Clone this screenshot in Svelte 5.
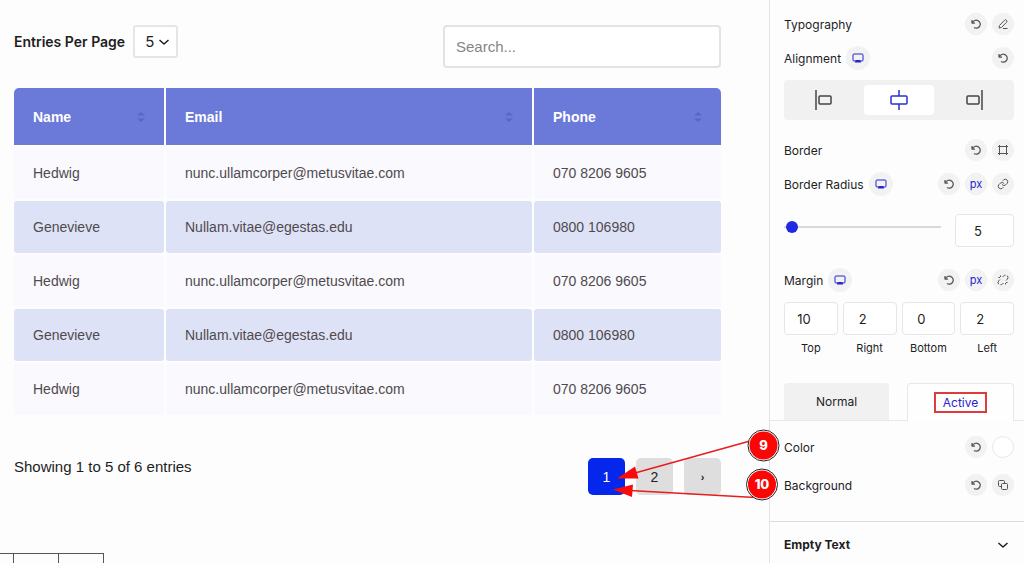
<!-- App.svelte -->

<script>
    const contacts = [
        { name: 'Hedwig', email: 'nunc.ullamcorper@metusvitae.com', phone: '070 8206 9605' },
        { name: 'Genevieve', email: 'Nullam.vitae@egestas.edu', phone: '0800 106980' },
        { name: 'Hedwig', email: 'nunc.ullamcorper@metusvitae.com', phone: '070 8206 9605' },
        { name: 'Genevieve', email: 'Nullam.vitae@egestas.edu', phone: '0800 106980' },
        { name: 'Hedwig', email: 'nunc.ullamcorper@metusvitae.com', phone: '070 8206 9605' },
        { name: 'Genevieve', email: 'Nullam.vitae@egestas.edu', phone: '0800 106980' }
    ];
    const columns = ['Name', 'Email', 'Phone'];
    const alignments = ['left', 'center', 'right'];

    let perPage = 5;
    let currentPage = 1;
    let search = '';
    let alignment = 'center';
    let radius = 5;
    let activeTab = 'Active';
    let margins = [
        { side: 'Top', value: '10' },
        { side: 'Right', value: '2' },
        { side: 'Bottom', value: '0' },
        { side: 'Left', value: '2' }
    ];

    $: filtered = contacts.filter(c => (c.name + c.email + c.phone).toLowerCase().includes(search.toLowerCase()));
    $: pageCount = Math.max(1, Math.ceil(filtered.length / perPage));
    $: first = (currentPage - 1) * perPage;
    $: visible = filtered.slice(first, first + perPage);

    function nextPage() {
        if (currentPage < pageCount) currentPage++;
    }
</script>

{#snippet icon(name)}
    <svg class="icon" viewBox="0 0 24 24" aria-hidden="true">
        {#if name === 'reset'}
            <path class="bold" d="M4 4v6h6M5 9.5A8 8 0 1 1 8 19" />
        {:else if name === 'edit'}
            <path d="M5 15 15 4.5a2.5 2.5 0 0 1 4 4L9 19l-5 1zM12 21h9" />
        {:else if name === 'screen'}
            <rect x="2" y="4" width="20" height="14" rx="2" />
            <path class="solid" d="M7 16h10v3h1v2H6v-2h1z" />
        {:else if name === 'frame'}
            <path d="M5 2v20M19 2v20M2 5h20M2 19h20" />
        {:else if name === 'link'}
            <path d="M10 13a5 5 0 0 0 7.5.5l3-3a5 5 0 0 0-7-7l-2 2M14 11a5 5 0 0 0-7.5-.5l-3 3a5 5 0 0 0 7 7l2-2" />
        {:else if name === 'unlink'}
            <path d="m18 13 2.5-2.5a5 5 0 0 0 0-7M17 2.5a5 5 0 0 0-3.5 1L11 6M6 11l-2.5 2.5a5 5 0 0 0 0 7M7 21.5a5 5 0 0 0 3.5-1L13 18M7 3v3M3 7h3M17 18v3M18 17h3" />
        {:else if name === 'copy'}
            <rect x="3" y="3" width="12" height="12" rx="2" />
            <rect class="front" x="9" y="9" width="12" height="12" rx="2" />
        {:else if name === 'chevron'}
            <path d="m3 8 9 8 9-8" />
        {/if}
    </svg>
{/snippet}

<div class="page">
    <main>
        <div class="toolbar">
            <div class="entries">
                <label for="perPage">Entries Per Page</label>
                <div class="select">
                    <select id="perPage" bind:value={perPage} on:change={() => (currentPage = 1)}>
                        <option value={5}>5</option>
                        <option value={10}>10</option>
                    </select>
                    {@render icon('chevron')}
                </div>
            </div>
            <input class="search" type="text" placeholder="Search..." aria-label="Search" bind:value={search} />
        </div>

        <table>
            <thead>
                <tr>
                    {#each columns as column}
                        <th>
                            <div class="heading">
                                {column}
                                <svg class="sort" viewBox="0 0 8 12" aria-hidden="true">
                                    <path d="M0 4.5 4 1l4 3.5zM0 7.5h8L4 11z" />
                                </svg>
                            </div>
                        </th>
                    {/each}
                </tr>
            </thead>
            <tbody>
                {#each visible as contact}
                    <tr>
                        <td>{contact.name}</td>
                        <td>{contact.email}</td>
                        <td>{contact.phone}</td>
                    </tr>
                {/each}
            </tbody>
        </table>

        <div class="table-footer">
            <span>Showing {first + 1} to {first + visible.length} of {filtered.length} entries</span>
            <div class="pagination">
                {#each Array(pageCount) as _, i}
                    <button class:current={currentPage === i + 1} on:click={() => (currentPage = i + 1)}>{i + 1}</button>
                {/each}
                <button class="next" aria-label="Next page" on:click={nextPage}>›</button>
            </div>
        </div>

        <div class="toolstrip"><i></i><i></i><i></i></div>
    </main>

    <aside>
        <section>
            <div class="row">
                <span>Typography</span>
                <div class="actions">
                    <button aria-label="Reset typography">{@render icon('reset')}</button>
                    <button aria-label="Edit typography">{@render icon('edit')}</button>
                </div>
            </div>
            <div class="row">
                <span>Alignment</span>
                <button class="device" aria-label="Alignment device">{@render icon('screen')}</button>
                <div class="actions">
                    <button aria-label="Reset alignment">{@render icon('reset')}</button>
                </div>
            </div>
            <div class="segments">
                {#each alignments as side}
                    <button class:selected={alignment === side} aria-label="Align {side}" on:click={() => (alignment = side)}>
                        <svg viewBox="0 0 20 20" aria-hidden="true">
                            {#if side === 'left'}
                                <path d="M2 0v20" />
                                <rect x="5" y="6" width="12" height="8" rx="1" />
                            {:else if side === 'center'}
                                <path d="M10 0v6M10 14v6" />
                                <rect x="2" y="6" width="16" height="8" rx="1" />
                            {:else}
                                <path d="M18 0v20" />
                                <rect x="3" y="6" width="12" height="8" rx="1" />
                            {/if}
                        </svg>
                    </button>
                {/each}
            </div>
        </section>

        <section class="border">
            <div class="row">
                <span>Border</span>
                <div class="actions">
                    <button aria-label="Reset border">{@render icon('reset')}</button>
                    <button aria-label="Edit border">{@render icon('frame')}</button>
                </div>
            </div>
            <div class="row">
                <label for="radius">Border Radius</label>
                <button class="device" aria-label="Border radius device">{@render icon('screen')}</button>
                <div class="actions">
                    <button aria-label="Reset border radius">{@render icon('reset')}</button>
                    <button class="unit">px</button>
                    <button aria-label="Link corners">{@render icon('link')}</button>
                </div>
            </div>
            <div class="slider">
                <input type="range" min="0" max="300" aria-label="Border radius slider" bind:value={radius} />
                <input id="radius" class="number" type="text" bind:value={radius} />
            </div>
        </section>

        <section class="margin">
            <div class="row">
                <span>Margin</span>
                <button class="device" aria-label="Margin device">{@render icon('screen')}</button>
                <div class="actions">
                    <button aria-label="Reset margin">{@render icon('reset')}</button>
                    <button class="unit">px</button>
                    <button aria-label="Unlink sides">{@render icon('unlink')}</button>
                </div>
            </div>
            <div class="sides">
                {#each margins as margin}
                    <label>
                        <input class="number" type="text" bind:value={margin.value} />
                        {margin.side}
                    </label>
                {/each}
            </div>
        </section>

        <div class="tabs">
            <button class:active={activeTab === 'Normal'} on:click={() => (activeTab = 'Normal')}>Normal</button>
            <button class:active={activeTab === 'Active'} on:click={() => (activeTab = 'Active')}><span class="marked">Active</span></button>
        </div>

        <section class="colors">
            <div class="row">
                <span>Color</span>
                <div class="actions">
                    <button aria-label="Reset color">{@render icon('reset')}</button>
                    <button class="swatch" aria-label="Pick color"></button>
                </div>
            </div>
            <div class="row">
                <span>Background</span>
                <div class="actions">
                    <button aria-label="Reset background">{@render icon('reset')}</button>
                    <button aria-label="Edit background">{@render icon('copy')}</button>
                </div>
            </div>
        </section>

        <button class="accordion">Empty Text {@render icon('chevron')}</button>
    </aside>

    <!-- numbered callouts pointing at the current page button -->
    <svg class="callouts" viewBox="600 425 180 80" aria-hidden="true">
        <path class="line" d="M750 441 635 473M765 498 630 490.5" />
        <path class="head" d="M617 478.5 635 466.5 638.5 478.5zM613 489.5 633 484.5 632 497z" />
        <g class="badge">
            <circle class="outer" cx="763.5" cy="445.5" r="15.5" />
            <circle class="inner" cx="763.5" cy="445.5" r="14" />
            <text x="763.5" y="450">9</text>
            <circle class="outer" cx="762" cy="484.5" r="15.5" />
            <circle class="inner" cx="762" cy="484.5" r="14" />
            <text x="762" y="489">10</text>
        </g>
    </svg>
</div>

<style>
    :global(body) {
        margin: 0;
        background: #fdfdfe;
    }

    .page {
        position: relative;
        display: flex;
        min-height: 100vh;
        overflow: hidden;
        font-family: Inter, "Liberation Sans", sans-serif;
        font-size: 12px;
        color: #1e1e1e;
    }

    button, input, select {
        box-sizing: border-box;
        margin: 0;
        padding: 0;
        border: 0;
        background: none;
        font: inherit;
        color: inherit;
    }

    .icon {
        width: 12px;
        height: 12px;
        fill: none;
        stroke: currentColor;
        stroke-width: 2;
        stroke-linejoin: round;
    }

    .bold {
        stroke-width: 2.5;
    }

    main {
        flex: 1;
        display: flex;
        flex-direction: column;
        padding-top: 25px;
        font-family: "Liberation Sans", Arial, sans-serif;
    }

    .toolbar, .table-footer {
        display: flex;
        justify-content: space-between;
        align-items: flex-start;
        margin: 0 48px 0 14px;
    }

    .entries {
        display: flex;
        align-items: center;
        gap: 8px;
        font-family: Inter, sans-serif;
        font-size: 14px;
        font-weight: 600;
    }

    .select {
        position: relative;
        font-size: 15px;
        font-weight: 400;
    }

    .select select {
        appearance: none;
        width: 45px;
        height: 33px;
        padding-left: 10px;
        border: 2px solid #e6e6e6;
        border-radius: 3px;
        background: #fff;
    }

    .select .icon {
        position: absolute;
        top: 11px;
        right: 8px;
        stroke-width: 3;
        pointer-events: none;
    }

    .search {
        width: 278px;
        height: 43px;
        padding: 0 11px;
        border: 2px solid #e3e3e3;
        border-radius: 4px;
        background: #fff;
        font-size: 15px;
    }

    .search::placeholder {
        color: #858585;
    }

    table {
        margin: 18px 46px 0 12px;
        border-spacing: 2px;
        table-layout: fixed;
        font-size: 14px;
    }

    th, td {
        padding: 0 19px;
        text-align: left;
    }

    th {
        height: 57px;
        background: #6b79d8;
        color: #fff;
    }

    th:first-child {
        width: 112px;
        border-top-left-radius: 5px;
    }

    th:last-child {
        width: 149px;
        border-top-right-radius: 5px;
    }

    .heading {
        display: flex;
        justify-content: space-between;
        align-items: center;
    }

    .sort {
        width: 8px;
        height: 12px;
        fill: #5868c2;
    }

    td {
        height: 52px;
        background: #f9f9fe;
        color: #504a4d;
    }

    tr:nth-child(even) td {
        border-radius: 3px;
        background: #dee2f7;
    }

    .table-footer {
        margin-top: 41px;
        font-size: 15px;
        line-height: 18px;
    }

    .pagination {
        display: flex;
        gap: 11px;
        font-size: 14px;
    }

    .pagination button {
        width: 37px;
        height: 37px;
        border-radius: 5px;
        background: #dedede;
        color: #222;
    }

    .pagination .current {
        background: #0527ec;
        color: #fff;
    }

    .pagination .next {
        font-size: 11px;
        font-weight: 700;
    }

    .toolstrip {
        display: flex;
        margin-top: 58px;
    }

    .toolstrip i {
        box-sizing: border-box;
        width: 45px;
        height: 10px;
        border-top: 1px solid #555;
        border-right: 1px solid #555;
    }

    .toolstrip i:first-child {
        width: 14px;
    }

    aside {
        box-sizing: border-box;
        width: 255px;
        padding-top: 12px;
        border-left: 1px solid #e2e2e4;
    }

    section {
        padding: 0 10px 0 14px;
    }

    .row {
        display: flex;
        align-items: center;
        height: 24px;
        margin-bottom: 10px;
    }

    .actions {
        display: flex;
        gap: 5px;
        margin-left: auto;
    }

    .row button {
        display: flex;
        align-items: center;
        justify-content: center;
        width: 22px;
        height: 22px;
        border-radius: 50%;
        background: #f2f2f3;
        color: #555;
    }

    .row .device {
        width: 24px;
        height: 24px;
        margin-left: 5px;
        color: #2a22cf;
    }

    .row .unit {
        color: #2a22cf;
        font-size: 11px;
    }

    .row .swatch {
        border: 1px solid #e8e8e8;
        background: #fff;
    }

    .solid {
        fill: currentColor;
        stroke: none;
    }

    .front {
        fill: #f2f2f3;
    }

    .segments {
        display: grid;
        grid-template-columns: repeat(3, 1fr);
        gap: 6px;
        padding: 5px;
        border-radius: 4px;
        background: #f1f1f1;
    }

    .segments button {
        display: flex;
        align-items: center;
        justify-content: center;
        height: 30px;
        border-radius: 4px;
        color: #444;
    }

    .segments .selected {
        background: #fff;
        color: #2a2fd8;
    }

    .segments svg {
        width: 20px;
        height: 20px;
        fill: none;
        stroke: currentColor;
        stroke-width: 1.5;
    }

    .border {
        margin-top: 18px;
    }

    .slider {
        display: flex;
        align-items: flex-start;
        gap: 14px;
        padding-top: 8px;
    }

    .slider input[type="range"] {
        appearance: none;
        flex: 1;
        min-width: 0;
        height: 26px;
    }

    .slider input[type="range"]::-webkit-slider-runnable-track {
        height: 2px;
        background: #d9d9dc;
    }

    .slider input[type="range"]::-webkit-slider-thumb {
        appearance: none;
        width: 12px;
        height: 12px;
        margin-top: -5px;
        border-radius: 50%;
        background: #2129e0;
    }

    .number {
        height: 33px;
        border: 1px solid #e6e6e8;
        border-radius: 4px;
        background: #fff;
        font-size: 13px;
    }

    .slider .number {
        width: 59px;
        padding-left: 18px;
    }

    .margin {
        margin-top: 21px;
    }

    .sides {
        display: grid;
        grid-template-columns: repeat(4, 1fr);
        gap: 5px;
    }

    .sides label {
        display: flex;
        flex-direction: column;
        gap: 5px;
        font-size: 11px;
        line-height: 16px;
        text-align: center;
    }

    .sides .number {
        width: 100%;
        padding-right: 14px;
        text-align: center;
    }

    .tabs {
        display: flex;
        gap: 18px;
        margin-top: 27px;
        padding: 0 10px 0 14px;
        border-bottom: 1px solid #e8e8e8;
    }

    .tabs button {
        flex: 1;
        height: 37px;
        border-radius: 4px 4px 0 0;
        background: #f1f1f1;
    }

    .tabs .active {
        height: 38px;
        margin-bottom: -1px;
        border: 1px solid #e8e8e8;
        border-bottom: 0;
        background: #fefefe;
        color: #2a22cf;
    }

    .marked {
        display: inline-block;
        padding: 1px 7px;
        border: 2px solid #dc3c3c;
    }

    .colors {
        padding-top: 14px;
        padding-bottom: 14px;
    }

    .colors .row + .row {
        margin-top: 14px;
    }

    .accordion {
        display: flex;
        justify-content: space-between;
        align-items: center;
        width: 100%;
        height: 46px;
        padding: 0 15px 0 14px;
        border-top: 1px solid #dcdce0;
        font-weight: 700;
    }

    .accordion .icon {
        stroke-width: 3;
    }

    .callouts {
        position: absolute;
        top: 425px;
        right: 244px;
        width: 180px;
        height: 80px;
        pointer-events: none;
    }

    .line {
        fill: none;
        stroke: #e91c1c;
        stroke-width: 1.5;
    }

    .head {
        fill: #fb0a0a;
    }

    .outer {
        fill: #fff;
        stroke: #222;
    }

    .inner {
        fill: #fb0505;
    }

    .badge text {
        fill: #fff;
        font-size: 13px;
        font-weight: 800;
        text-anchor: middle;
    }
</style>
